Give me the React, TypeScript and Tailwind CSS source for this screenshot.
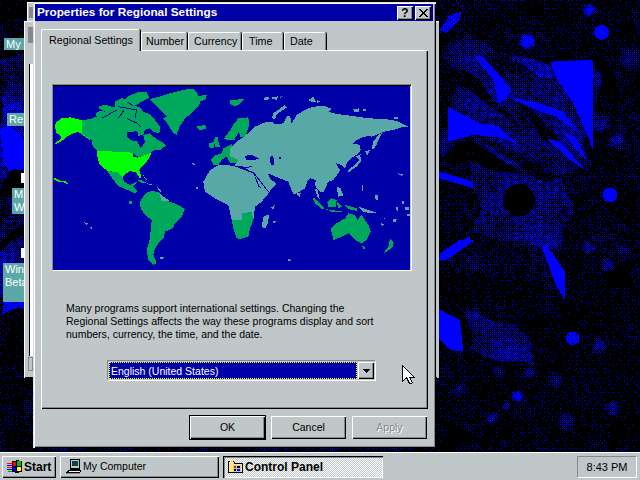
const font = { fontFamily: '"Liberation Sans", Arial, sans-serif' };

const raised = 'shadow-[inset_1px_1px_0_#ffffff,inset_-1px_-1px_0_#000000,inset_-2px_-2px_0_#87888f]';
const windowEdge = 'shadow-[inset_1px_1px_0_#dfdfdf,inset_2px_2px_0_#ffffff,inset_-1px_-1px_0_#000000,inset_-2px_-2px_0_#87888f]';

type Shape =
  | { pts: number[]; d: number }
  | { c: [number, number, number]; d: number; soft?: boolean };

// zoomed crops were read at 3x, so shapes are noted in those numbers
const top = (pts: number[]) => pts.map((v, i) => (i % 2 === 0 ? 430 + v / 3 : v / 3));
const low = (pts: number[]) => pts.map((v, i) => (i % 2 === 0 ? 430 + v / 3 : 240 + v / 3));
const topC = (x: number, y: number, r: number): [number, number, number] => [430 + x / 3, y / 3, r / 3];
const lowC = (x: number, y: number, r: number): [number, number, number] => [430 + x / 3, 240 + y / 3, r / 3];

const shapes: Shape[] = [
  // left strip
  { pts: [0, 0, 36, 0, 36, 25, 0, 25], d: 0.05 },
  { pts: [0, 25, 36, 25, 36, 40, 0, 40], d: 0.22 },
  { pts: [0, 50, 36, 50, 36, 62, 0, 62], d: 0.08 },
  { pts: [0, 62, 36, 62, 36, 110, 0, 110], d: 0.36 },
  { pts: [0, 110, 36, 110, 36, 175, 0, 190], d: 0.55 },
  { pts: [0, 130, 8, 125, 24, 140, 24, 168, 12, 178, 4, 160], d: 1 },
  { pts: [0, 190, 12, 176, 36, 180, 36, 192, 6, 205], d: 0.05 },
  { pts: [0, 205, 36, 192, 36, 228, 0, 242], d: 0.38 },
  { pts: [0, 242, 36, 228, 36, 238, 0, 252], d: 0.08 },
  { pts: [0, 252, 36, 238, 36, 300, 0, 300], d: 0.45 },
  { pts: [0, 300, 36, 300, 36, 316, 0, 316], d: 0.65 },
  { pts: [0, 316, 36, 316, 36, 370, 0, 370], d: 0.07 },
  { pts: [0, 370, 36, 370, 36, 452, 0, 452], d: 0.17 },

  // right side, upper crop
  { pts: top([0, 0, 630, 0, 630, 720, 0, 720]), d: 0.17 },
  { pts: top([280, 0, 360, 0, 350, 30, 290, 30]), d: 0.02 },
  { pts: top([590, 90, 630, 90, 630, 130, 600, 130]), d: 0.02 },
  { pts: top([55, 140, 490, 180, 490, 510, 55, 510]), d: 0.38 },
  { pts: top([55, 140, 150, 135, 280, 175, 360, 190, 400, 260, 300, 280, 200, 200, 55, 210]), d: 0.3 },
  { pts: top([250, 170, 340, 160, 370, 200, 300, 210]), d: 0.55 },
  { pts: top([55, 220, 180, 300, 240, 350, 100, 300, 55, 280]), d: 0.15 },
  { pts: top([250, 300, 330, 340, 390, 370, 430, 420, 360, 390, 300, 350]), d: 0.12 },
  { pts: top([100, 415, 240, 430, 330, 480, 400, 510, 300, 510, 220, 450]), d: 0.2 },
  { pts: top([490, 180, 530, 180, 530, 300, 490, 300]), d: 0.02 },
  { pts: top([360, 185, 490, 180, 490, 455, 470, 400, 430, 310, 380, 235]), d: 1 },
  { pts: top([55, 320, 100, 345, 150, 370, 205, 378, 260, 430, 200, 410, 130, 405, 55, 425]), d: 1 },
  { pts: top([130, 165, 160, 170, 245, 270, 225, 300, 205, 310, 190, 240]), d: 1 },
  { pts: top([235, 290, 330, 310, 400, 335, 440, 395, 380, 350, 330, 335]), d: 1 },
  { pts: top([400, 395, 440, 415, 470, 480, 430, 440]), d: 1 },
  { pts: top([350, 415, 390, 425, 440, 480, 465, 510, 420, 480]), d: 1 },
  { pts: top([55, 470, 120, 450, 200, 460, 270, 510, 55, 510]), d: 0.06 },
  { pts: top([125, 515, 400, 515, 400, 720, 125, 720]), d: 0.42 },
  { pts: top([28, 515, 130, 545, 130, 565, 28, 535]), d: 1 },
  { pts: top([28, 90, 60, 45, 95, 35, 90, 60, 50, 100]), d: 0.85 },
  { pts: top([100, 720, 150, 690, 120, 720]), d: 1 },
  { c: topC(267, 600, 48), d: 0.02 },
  { c: topC(515, 97, 22), d: 1 },
  { c: topC(540, 585, 22), d: 1 },
  { c: topC(478, 30, 24), d: 0.8, soft: true },
  { c: topC(292, 125, 28), d: 0.95, soft: true },
  { c: topC(600, 170, 50), d: 0.45, soft: true },
  { c: topC(510, 370, 40), d: 0.5, soft: true },
  { c: topC(560, 425, 35), d: 0.6, soft: true },

  // right side, lower crop
  { pts: low([0, 120, 630, 120, 630, 640, 0, 640]), d: 0.15 },
  { pts: low([125, 0, 400, 0, 400, 110, 125, 110]), d: 0.22 },
  { pts: low([100, 240, 240, 250, 330, 360, 100, 360]), d: 0.4 },
  { pts: low([28, 60, 30, 40, 90, 0, 135, 0, 50, 60]), d: 1 },
  { pts: low([335, 20, 350, 15, 405, 95, 405, 180, 375, 130]), d: 1 },
  { pts: low([28, 208, 90, 240, 100, 335, 60, 330, 28, 295]), d: 1 },
  { pts: low([540, 90, 630, 80, 630, 170, 560, 160]), d: 0.02 },
  { pts: low([385, 180, 420, 180, 420, 350, 385, 350]), d: 0.06 },
  { pts: low([28, 520, 80, 600, 110, 640, 28, 640]), d: 0.02 },
  { pts: low([500, 570, 630, 540, 630, 640, 520, 640]), d: 0.05 },
  { c: lowC(428, 295, 20), d: 0.9 },
  { c: lowC(475, 25, 28), d: 0.55, soft: true },
  { c: lowC(530, 75, 28), d: 0.5, soft: true },
  { c: lowC(580, 30, 28), d: 0.45, soft: true },
  { c: lowC(510, 320, 35), d: 0.5, soft: true },
  { c: lowC(375, 420, 35), d: 0.55, soft: true },
  { c: lowC(298, 398, 24), d: 0.55, soft: true },
  { c: lowC(205, 395, 28), d: 0.45, soft: true },
  { c: lowC(262, 468, 22), d: 0.8, soft: true },
  { c: lowC(228, 500, 18), d: 0.5, soft: true },
  { c: lowC(187, 535, 22), d: 0.6, soft: true },
  { c: lowC(550, 505, 32), d: 0.55, soft: true },
  { c: lowC(410, 545, 38), d: 0.6, soft: true },
  { c: lowC(90, 450, 32), d: 0.4, soft: true },
  { c: lowC(225, 610, 22), d: 0.4, soft: true },
];

function inPolygon(pts: number[], x: number, y: number) {
  let hit = false;
  for (let i = 0, j = pts.length - 2; i < pts.length; j = i, i += 2) {
    const yi = pts[i + 1];
    const yj = pts[j + 1];
    if (yi > y !== yj > y && x < ((pts[j] - pts[i]) * (y - yi)) / (yj - yi) + pts[i]) hit = !hit;
  }
  return hit;
}

function densityAt(x: number, y: number) {
  // soft regions get wobbly edges so they do not read as boxes
  const wx = x + 7 * Math.sin(y / 19) + 3 * Math.sin(y / 7);
  const wy = y + 7 * Math.sin(x / 23) + 3 * Math.sin(x / 9);
  let d = 0.2;
  for (const s of shapes) {
    if ('pts' in s) {
      if (s.d >= 0.85 ? inPolygon(s.pts, x, y) : inPolygon(s.pts, wx, wy)) d = s.d;
    } else {
      const dist = Math.hypot(x - s.c[0], y - s.c[1]);
      if (dist <= s.c[2]) {
        if (s.soft) d = Math.max(d, s.d * (1 - (dist * dist) / (s.c[2] * s.c[2])));
        else d = s.d;
      }
    }
  }
  if (d < 0.85) d *= 1 + 0.3 * Math.sin(x / 17 + y / 23) * Math.sin(x / 31 - y / 13);
  return d;
}

const bayer = [
  [0, 8, 2, 10],
  [12, 4, 14, 6],
  [3, 11, 1, 9],
  [15, 7, 13, 5],
];

// the wallpaper is a 16 colour dither, so it is drawn dot by dot
function ditherPath() {
  let seed = 12345;
  const rand = () => {
    seed = (seed * 1103515245 + 12345) & 0x7fffffff;
    return seed / 0x7fffffff;
  };
  const parts: string[] = [];
  for (let y = 0; y < 452; y++) {
    let runStart = -1;
    for (let x = 0; x <= 640; x++) {
      const hidden = x >= 36 && x < 436 && y < 447;
      let on = false;
      if (x < 640 && !hidden) {
        const d = densityAt(x + 0.5, y + 0.5);
        const t = (bayer[y & 3][x & 3] + 0.5) / 16;
        on = d >= 0.85 ? d >= 1 || t < d + 0.05 : d > 0.7 * t + 0.3 * rand();
      }
      if (on && runStart < 0) runStart = x;
      if (!on && runStart >= 0) {
        parts.push(`M${runStart} ${y}h${x - runStart}v1h-${x - runStart}z`);
        runStart = -1;
      }
    }
  }
  return parts.join('');
}

const wallpaperPath = ditherPath();

function Wallpaper() {
  return (
    <svg className="absolute left-0 top-0" width="640" height="452" shapeRendering="crispEdges">
      <rect width="640" height="452" fill="#000000" />
      <path d={wallpaperPath} fill="#0000ff" />
    </svg>
  );
}

function DesktopLabel({ className, lines }: { className: string; lines: string[] }) {
  return (
    <div className={`absolute bg-[#5ca8a8] pl-[2px] text-[11px] leading-[13px] text-white ${className}`} style={font}>
      {lines.map((l) => (
        <div key={l}>{l}</div>
      ))}
    </div>
  );
}

function WorldMap() {
  const sea = '#0000a8';
  const green = '#00a85c';
  const teal = '#58a8a8';
  const lime = '#00ff00';
  return (
    <svg width="357" height="184" viewBox="9 3 1071 552" shapeRendering="crispEdges" className="block">
      <rect x="0" y="0" width="1100" height="560" fill={sea} />
      {/* Americas */}
      <g fill={green}>
        <polygon points="298,42 310,40 335,33 360,25 385,18 410,13 430,12 442,25 445,33 470,30 468,42 450,50 447,62 435,72 425,85 405,100 392,120 385,135 380,150 368,142 358,125 350,112 340,100 352,95 342,85 332,75 320,65 310,55" />
        <polygon points="438,125 465,120 470,130 450,137" />
        <polygon points="95,105 118,103 140,95 138,85 150,78 165,80 145,70 150,62 170,60 195,68 195,50 215,40 228,42 232,35 262,22 290,22 298,38 275,50 255,62 270,68 280,80 300,88 315,105 330,125 328,145 310,140 300,130 285,135 280,150 300,145 322,165 335,170 347,182 330,195 308,197 300,205 280,212 265,216 250,205 140,197 125,178 125,165 95,145" />
        <polygon points="172,258 205,262 218,278 222,290 240,300 250,295 262,290 255,300 250,305 262,318 255,325 240,318 205,303 190,285 180,270" />
        <polygon points="270,350 280,335 295,320 310,318 328,323 335,345 360,350 385,360 405,372 395,395 375,415 368,430 345,440 340,460 325,475 315,490 310,510 320,535 310,540 295,525 290,495 298,470 303,430 305,405 285,390 272,370" />
        <polygon points="238,347 245,347 245,358 238,358" />
        <polygon points="262,285 280,287 290,295 270,292" />
        {/* Europe */}
        <polygon points="490,240 483,225 495,212 515,205 520,190 545,178 558,205 570,215 560,235 540,235 530,215 515,225 505,240" />
        <polygon points="478,175 495,170 490,190 478,187" />
        <polygon points="495,155 503,155 505,170 510,185 497,188 492,172" />
        <polygon points="522,160 545,130 570,105 575,125 555,160 545,165 530,165" />
      </g>
      <g fill={sea}>
        <polygon points="232,142 262,138 265,152 280,150 285,172 272,190 262,170 240,165 232,155" />
      </g>
      <g stroke={sea} strokeWidth="3" fill="none">
        <polyline points="155,100 200,75" />
        <polyline points="205,65 260,75 255,100" />
        <polyline points="222,75 205,100" />
        <polyline points="230,100 262,115 272,125" />
        <polyline points="230,50 250,62" />
      </g>
      <g fill={lime}>
        <polygon points="18,112 35,100 60,97 95,105 95,145 110,155 125,168 105,155 95,148 85,140 70,145 50,155 40,165 18,178 15,175 35,160 30,150 20,145 15,125" />
        <polygon points="140,197 250,203 250,215 262,218 280,212 305,203 300,215 290,230 275,245 268,255 275,280 268,278 258,262 240,258 222,270 218,278 205,262 175,258 160,250 148,235 142,215" />
        <polygon points="12,277 30,287 45,287 57,297 52,297 40,292 25,290 12,283" />
      </g>
      <g fill={teal}>
        <polygon points="328,325 340,335 360,348 335,348" />
        <polygon points="278,268 292,285 285,283" />
        <polygon points="290,295 310,298 300,300" />
        <polygon points="318,300 333,318 330,322" />
        <polygon points="103,412 115,415 110,420" />
        <polygon points="118,425 128,428 125,432" />
        <polygon points="328,518 342,516 340,522 330,522" />
        <polygon points="425,232 435,238 430,240" />
        <polygon points="438,305 444,305 444,312 438,312" />
      </g>
      {/* Old world */}
      <g transform="translate(540 0)">
        <g fill={teal}>
          <polygon points="-80,290 -60,255 -30,238 0,238 30,250 70,265 85,305 120,320 95,350 75,365 70,405 5,405 -5,360 -45,340 -75,320" />
          <polygon points="0,190 20,170 35,160 60,140 75,125 105,112 125,110 135,118 160,115 170,95 180,92 185,115 200,90 225,75 240,68 270,62 290,65 305,72 295,80 310,85 345,90 380,95 420,100 470,103 500,108 535,125 510,128 490,135 470,138 450,145 425,155 415,152 395,158 380,165 368,175 390,180 392,195 385,205 370,215 350,235 345,250 335,240 318,235 330,255 325,265 310,285 295,290 288,305 280,322 270,320 262,312 255,300 258,285 240,280 232,290 225,310 200,325 190,328 175,290 150,280 130,272 115,268 120,280 140,298 115,320 90,305 78,280 70,262 55,255 40,245 25,242 10,245 20,232 25,225 5,215 0,215" />
          <polygon points="125,100 130,85 165,60 170,68 140,88 135,102" />
          <polygon points="425,190 430,170 445,150 455,145 445,165 440,180 430,192" />
          <polygon points="355,255 385,230 392,215 393,228 380,245 355,262" />
          <polygon points="405,200 420,195 412,210" />
          <polygon points="378,215 392,208 388,225" />
          <polygon points="255,312 262,312 270,345 262,335" />
          <polygon points="95,425 100,395 118,388 112,420 105,430" />
          <polygon points="122,368 135,360 130,372" />
          <polygon points="200,325 212,325 208,338" />
          <polygon points="320,305 332,310 340,332 325,335" />
          <polygon points="385,365 430,380 445,385 420,385 400,380" />
          <polygon points="100,38 118,36 115,45 102,44" />
          <polygon points="125,38 145,34 140,45 128,42" />
          <polygon points="150,35 158,33 150,42" />
          <polygon points="235,45 250,35 258,50 245,50" />
          <polygon points="262,45 270,50 260,55" />
          <polygon points="370,72 388,70 388,80 372,80" />
          <polygon points="398,72 408,72 408,78 398,78" />
          <polygon points="492,97 503,95 503,101 492,101" />
          <polygon points="505,265 518,268 515,272 507,270" />
          <polygon points="395,300 400,300 400,318 395,318" />
          <polygon points="435,330 445,330 443,345 437,345" />
          <polygon points="515,348 523,348 523,357 515,357" />
          <polygon points="498,365 505,367 505,377 500,377" />
          <polygon points="525,365 538,367 535,377 525,375" />
          <polygon points="530,387 540,387 540,393 530,393" />
          <polygon points="490,403 500,403 497,410 490,410" />
          <polygon points="458,398 465,398 465,404" />
          <polygon points="450,413 462,418 458,423" />
          <polygon points="175,522 183,525 180,530 175,528" />
          <polygon points="128,408 140,410 130,414" />
        </g>
        <g fill={sea}>
          <polygon points="120,215 130,212 132,240 122,240" />
          <polygon points="147,215 153,215 153,222 147,222" />
          <polygon points="45,215 60,208 90,222 65,225 48,225" />
        </g>
        <g stroke={sea} strokeWidth="3" fill="none">
          <polyline points="70,262 115,320" />
          <polyline points="118,268 145,285" />
          <polyline points="-30,238 0,240 40,248 65,245" />
        </g>
        <g fill={green}>
          <polygon points="5,405 35,405 35,385 65,380 70,405 60,430 55,455 30,462 20,460 10,430" />
          <polygon points="0,165 5,125 25,100 55,97 58,120 45,155 30,155 25,125 10,150 15,165" />
          <polygon points="302,430 320,415 345,400 355,385 375,390 382,405 395,390 415,420 422,440 410,465 395,475 375,465 355,445 335,455 310,465" />
          <polygon points="480,460 492,475 485,490 470,500 460,505 475,485" />
          <polygon points="395,480 408,490 400,492" />
          <polygon points="247,335 265,350 285,370 275,372 255,355" />
          <polygon points="285,372 340,380 310,382" />
          <polygon points="292,350 305,340 320,345 318,365 295,365" />
          <polygon points="320,350 335,365 325,370" />
          <polygon points="340,358 380,370 380,378 355,372" />
          <polygon points="0,45 45,42 25,60 12,65 0,55" />
        </g>
      </g>
    </svg>
  );
}

function WinButton({ label, className = '', disabled = false }: { label: string; className?: string; disabled?: boolean }) {
  return (
    <div className={`flex h-[23px] w-[75px] items-center justify-center bg-[#c0c7c8] ${raised} ${className}`}>
      {disabled ? (
        <span className="text-[#87888f] [text-shadow:1px_1px_0_#ffffff]">{label}</span>
      ) : (
        <span className="text-black">{label}</span>
      )}
    </div>
  );
}

function TabItem({ label, width, pad }: { label: string; width: string; pad: string }) {
  return (
    <div className={`flex h-[18px] items-center rounded-t-[2px] border-l border-t border-white bg-[#c0c7c8] shadow-[inset_-1px_0_0_#87888f,1px_0_0_#000000] ${width} ${pad}`}>
      {label}
    </div>
  );
}

function StartFlag() {
  return (
    <svg width="17" height="16" viewBox="0 0 17 16" shapeRendering="crispEdges">
      <path d="M6 2h4V1h3v1h3v11h-3v1h-4v-1H6z" fill="#000" />
      <path d="M7 3h3v4H7z" fill="#ff0000" />
      <path d="M11 2h4v5h-4z" fill="#00c000" />
      <path d="M7 8h3v4H7z" fill="#0000ff" />
      <path d="M11 8h4v4h-4z" fill="#ffff00" />
      <path d="M1 4h5v1H1zM1 8h5v1H1z" fill="#ff0000" />
      <path d="M1 6h5v1H1zM1 10h5v1H1z" fill="#0000ff" />
      <path d="M2 12h4v1H2z" fill="#00a000" />
    </svg>
  );
}

function ComputerIcon() {
  return (
    <svg width="16" height="16" viewBox="0 0 16 16" shapeRendering="crispEdges">
      <path d="M4 0h10v10H4z" fill="#000" />
      <path d="M5 1h8v8H5z" fill="#c0c7c8" />
      <path d="M6 2h6v5H6z" fill="#004848" />
      <path d="M4 10h10v1H4z" fill="#000" />
      <path d="M2 11h13v1l-1 2H0v-1z" fill="#000" />
      <path d="M3 12h11l-1 1H2z" fill="#ffffff" />
      <path d="M0 14h14v1H0z" fill="#87888f" />
    </svg>
  );
}

function PanelIcon() {
  return (
    <svg width="16" height="14" viewBox="0 0 16 14" shapeRendering="crispEdges">
      <path d="M0 1h6v1h1v1h8v10H0z" fill="#000" />
      <path d="M1 2h5v2h8v8H1z" fill="#ffe98a" />
      <path d="M2 1h3v1H2z" fill="#ffff00" />
      <path d="M5 5h8v7H5z" fill="#c0c7c8" />
      <path d="M6 6h2v2H6z" fill="#ff0000" />
      <path d="M9 6h3v2H9z" fill="#000" />
      <path d="M6 9h2v2H6z" fill="#000" />
      <path d="M9 9h3v2H9z" fill="#0000ff" />
      <path d="M3 5h1v7H3z" fill="#ffff00" />
    </svg>
  );
}

export default function App() {
  return (
    <div className="flex h-[480px] w-[640px] flex-col overflow-hidden bg-black text-[10.5px] text-black" style={font}>
      <div className="relative h-[452px] w-[640px]">
        <Wallpaper />

        <DesktopLabel className="left-[4px] top-[38px] h-[12px] w-[24px] leading-[12px]" lines={['My']} />
        <DesktopLabel className="left-[7px] top-[113px] h-[13px] w-[20px]" lines={['Re']} />
        <DesktopLabel className="left-[12px] top-[188px] h-[26px] w-[16px]" lines={['M', 'W']} />
        <DesktopLabel className="left-[3px] top-[263px] h-[39px] w-[24px]" lines={['Win', 'Beta']} />
        <div className="absolute left-[21px] top-[173px] h-[10px] w-[4px] bg-white" />
        <div className="absolute left-[21px] top-[248px] h-[10px] w-[4px] bg-white" />

        {/* windows behind the dialog */}
        <div className="absolute left-[27px] top-[2px] h-[40px] w-[10px] bg-[#c0c7c8] shadow-[inset_1px_1px_0_#ffffff]">
          <div className="ml-[2px] mt-[5px] h-[11px] w-[4px] bg-[#87888f]" />
        </div>
        <div className="absolute left-[24px] top-[21px] h-[357px] w-[415px] bg-[#c0c7c8] shadow-[inset_1px_1px_0_#ffffff,inset_-2px_0_0_#c0c7c8,inset_-1px_-1px_0_#000000]">
          <div className="ml-[4px] mt-[6px] h-[16px] w-[5px] bg-[#87888f]" />
          <div className="ml-[5px] mt-[21px] h-[292px] w-[4px] border-l border-black bg-white" />
          <div className="ml-[4px] mt-[1px] h-[14px] w-[5px] border border-[#87888f]" />
        </div>

        {/* dialog */}
        <div className={`absolute left-[33px] top-[2px] flex h-[446px] w-[403px] flex-col bg-[#c0c7c8] pb-[7px] pl-[2px] pr-[3px] pt-[2px] ${windowEdge}`}>
          <div className="flex h-[17px] shrink-0 items-center justify-between bg-[#0000a8] pl-[2px] pr-[2px]">
            <span className="text-[11.8px] font-bold text-white">Properties for Regional Settings</span>
            <div className="flex gap-[2px]">
              <div className={`flex h-[14px] w-[16px] items-center justify-center bg-[#c0c7c8] text-[12px] font-bold leading-none ${raised}`}>?</div>
              <div className={`flex h-[14px] w-[16px] items-center justify-center bg-[#c0c7c8] ${raised}`}>
                <svg width="9" height="8" viewBox="0 0 9 8" shapeRendering="crispEdges">
                  <path d="M0 0h2l2.500 3 2.500-3h2L5.500 4 9 8H7L4.500 5 2 8H0l3.500-4z" fill="#000" />
                </svg>
              </div>
            </div>
          </div>

          <div className="relative flex h-[29px] shrink-0 items-end pl-[6px] text-[10.7px]">
            <div className="relative z-10 mb-[-1px] flex h-[22px] w-[99px] items-center justify-center rounded-t-[2px] border-l border-t border-white bg-[#c0c7c8] pb-[1px] shadow-[inset_-1px_0_0_#87888f,1px_0_0_#000000]">
              Regional Settings
            </div>
            <div className="ml-[1px] flex gap-[1px]">
              <TabItem label="Number" width="w-[46px]" pad="pl-[4px]" />
              <TabItem label="Currency" width="w-[53px]" pad="pl-[5px]" />
              <TabItem label="Time" width="w-[41px]" pad="pl-[6px]" />
              <TabItem label="Date" width="w-[42px]" pad="pl-[5px]" />
            </div>
          </div>

          <div className="ml-[6px] flex h-[359px] w-[387px] shrink-0 flex-col border-l border-t border-white pl-[10px] shadow-[inset_-1px_-1px_0_#000000,inset_-2px_-2px_0_#87888f]">
            <div className="mt-[33px] w-[360px] border-b border-l border-r border-t border-b-white border-l-[#87888f] border-r-white border-t-[#87888f]">
              <div className="border-t border-black">
                <WorldMap />
              </div>
            </div>
            <p className="ml-[14px] mt-[31px] whitespace-nowrap text-[10.5px] leading-[13px]">
              Many programs support international settings. Changing the
              <br />
              Regional Settings affects the way these programs display and sort
              <br />
              numbers, currency, the time, and the date.
            </p>
            <div className="relative ml-[55px] mt-[19px] flex h-[21px] w-[269px] items-stretch border-b border-l border-r border-t border-b-white border-l-[#87888f] border-r-white border-t-[#87888f] p-[1px]">
              <div className="flex flex-1 items-center bg-[#0000a8] pl-[2px] pt-[3px] text-white outline outline-1 -outline-offset-1 outline-dotted outline-[#ffff00]">
                English (United States)
              </div>
              <div className={`ml-[1px] flex w-[16px] items-center justify-center bg-[#c0c7c8] ${raised}`}>
                <svg width="7" height="4" viewBox="0 0 7 4" shapeRendering="crispEdges">
                  <path d="M0 0h7v1H6v1H5v1H4v1H3V3H2V2H1V1H0z" fill="#000" />
                </svg>
              </div>
            </div>
          </div>

          <div className="mr-[6px] mt-[7px] flex shrink-0 justify-end gap-[6px]">
            <WinButton label="OK" className="outline outline-1 outline-black" />
            <WinButton label="Cancel" />
            <WinButton label="Apply" disabled />
          </div>
        </div>

        {/* mouse pointer */}
        <svg className="absolute left-[402px] top-[365px]" width="13" height="20" viewBox="0 0 13 20" shapeRendering="crispEdges">
          <path d="M0.500 0.500v16l4-4 3 6h2l1-1-3-5h5z" fill="#ffffff" stroke="#000000" strokeWidth="1" />
        </svg>
      </div>

      {/* taskbar */}
      <div className="flex h-[28px] shrink-0 items-center gap-[4px] border-t border-white bg-[#c0c7c8] pl-[2px] pr-[3px] pt-[1px]">
        <div className={`flex h-[22px] w-[54px] shrink-0 items-center gap-[1px] pl-[4px] text-[12px] font-bold ${raised}`}>
          <StartFlag />
          <span>Start</span>
        </div>
        <div className={`flex h-[22px] w-[159px] shrink-0 items-center gap-[1px] pl-[6px] ${raised}`}>
          <ComputerIcon />
          <span>My Computer</span>
        </div>
        <div className="flex h-[22px] w-[160px] shrink-0 items-center gap-[1px] bg-[repeating-conic-gradient(#ffffff_0_25%,#c0c7c8_0_50%)] bg-[length:2px_2px] pl-[5px] text-[12px] font-bold shadow-[inset_1px_1px_0_#000000,inset_2px_2px_0_#87888f,inset_-1px_-1px_0_#ffffff]">
          <PanelIcon />
          <span>Control Panel</span>
        </div>
        <div className="ml-auto flex h-[22px] w-[60px] items-center justify-center border-b border-l border-r border-t border-b-white border-l-[#87888f] border-r-white border-t-[#87888f] text-[11px]">
          8:43 PM
        </div>
      </div>
    </div>
  );
}
